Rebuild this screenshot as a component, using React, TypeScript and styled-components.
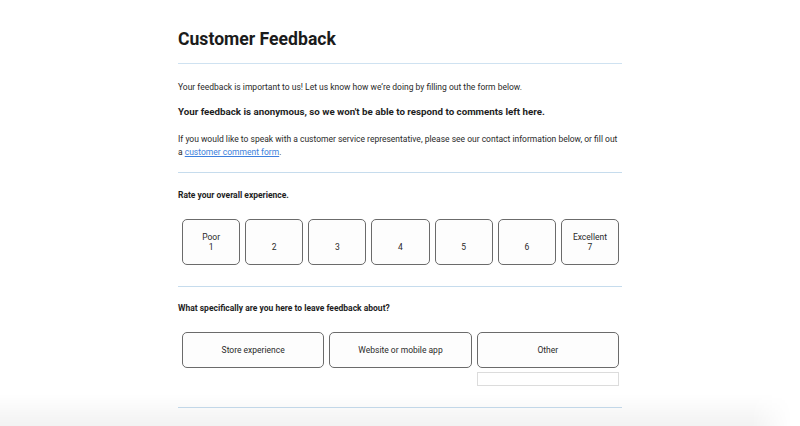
import styled, { createGlobalStyle } from 'styled-components'

const GlobalStyle = createGlobalStyle`
  * {
    box-sizing: border-box;
  }
  body {
    margin: 0;
    background: #ffffff;
    font-family: Roboto, 'Liberation Sans', Arial, sans-serif;
    color: #222222;
  }
`

const ratings = [
  { label: 'Poor', value: 1 },
  { label: '', value: 2 },
  { label: '', value: 3 },
  { label: '', value: 4 },
  { label: '', value: 5 },
  { label: '', value: 6 },
  { label: 'Excellent', value: 7 },
]

const topics = ['Store experience', 'Website or mobile app', 'Other']

export default function App() {
  return (
    <>
      <GlobalStyle />
      <Page>
        <Header>
          <Title>Customer Feedback</Title>
        </Header>
        <Section $pt={17} $pb={13}>
          <Text>
            Your feedback is important to us! Let us know how we’re doing by filling out the form below.
          </Text>
          <Notice>Your feedback is anonymous, so we won't be able to respond to comments left here.</Notice>
          <Text>
            If you would like to speak with a customer service representative, please see our contact
            information below, or fill out a <Link href='#'>customer comment form</Link>.
          </Text>
        </Section>
        <Section $pt={16} $pb={21}>
          <Question>Rate your overall experience.</Question>
          <RatingRow>
            {ratings.map((r) => (
              <RatingButton key={r.value} type='button'>
                <span>{r.label}</span>
                <span>{r.value}</span>
              </RatingButton>
            ))}
          </RatingRow>
        </Section>
        <Section $pt={15} $pb={21}>
          <Question>What specifically are you here to leave feedback about?</Question>
          <TopicGrid>
            {topics.map((t) => (
              <TopicButton key={t} type='button'>
                {t}
              </TopicButton>
            ))}
            <OtherInput type='text' aria-label='Other' />
          </TopicGrid>
        </Section>
      </Page>
      <BottomShade />
    </>
  )
}

const Page = styled.main`
  width: 444px;
  margin: 0 auto;
  padding-top: 27px;
`
const Header = styled.header`
  padding-bottom: 12px;
  border-bottom: 1px solid #cfe2f1;
`
const Title = styled.h1`
  margin: 0;
  font-size: 17.6px;
  line-height: 24px;
  font-weight: 700;
  color: #1b1b1b;
`
const Section = styled.section<{ $pt: number; $pb: number }>`
  padding: ${(p) => p.$pt}px 0 ${(p) => p.$pb}px;
  border-bottom: 1px solid #c6dced;
`
const Text = styled.p`
  margin: 0;
  font-size: 8.5px;
  line-height: 13px;
  color: #2a2a2a;
`
const Notice = styled.p`
  margin: 11px 0 14px;
  font-size: 9.75px;
  line-height: 14px;
  font-weight: 700;
  color: #1e1e1e;
`
const Link = styled.a`
  color: #3d7fdc;
  text-decoration: underline;
`
const Question = styled.h2`
  margin: 0 0 18px;
  font-size: 8.5px;
  line-height: 12px;
  font-weight: 700;
  color: #1e1e1e;
`
const RatingRow = styled.div`
  display: grid;
  grid-template-columns: repeat(7, 1fr);
  gap: 5px;
  margin: 0 3px 0 4px;
`
const RatingButton = styled.button`
  height: 46px;
  display: flex;
  flex-direction: column;
  align-items: center;
  justify-content: center;
  padding: 0;
  border: 1px solid #6b6b6b;
  border-radius: 5px;
  background: #fdfdfd;
  font-family: inherit;
  font-size: 8.5px;
  line-height: 10px;
  color: #2a2a2a;
  span {
    display: block;
    height: 10px;
  }
`
const TopicGrid = styled.div`
  display: grid;
  grid-template-columns: repeat(3, 1fr);
  column-gap: 5px;
  row-gap: 4px;
  margin: 0 3px 0 4px;
`
const TopicButton = styled.button`
  height: 36px;
  padding: 0;
  border: 1px solid #6b6b6b;
  border-radius: 5px;
  background: #fdfdfd;
  font-family: inherit;
  font-size: 8.5px;
  color: #2a2a2a;
`
const OtherInput = styled.input`
  grid-column: 3;
  height: 14px;
  padding: 0 4px;
  border: 1px solid #dcdcdc;
  border-radius: 0;
  background: #ffffff;
  font-family: inherit;
  font-size: 8px;
  outline: none;
`
const BottomShade = styled.div`
  position: fixed;
  left: 0;
  right: 0;
  bottom: 0;
  height: 32px;
  pointer-events: none;
  background: linear-gradient(to bottom, rgba(0, 0, 0, 0), rgba(0, 0, 0, 0.05));
  -webkit-mask-image: linear-gradient(to right, #000 0%, #000 94%, transparent 99%);
  mask-image: linear-gradient(to right, #000 0%, #000 94%, transparent 99%);
`
